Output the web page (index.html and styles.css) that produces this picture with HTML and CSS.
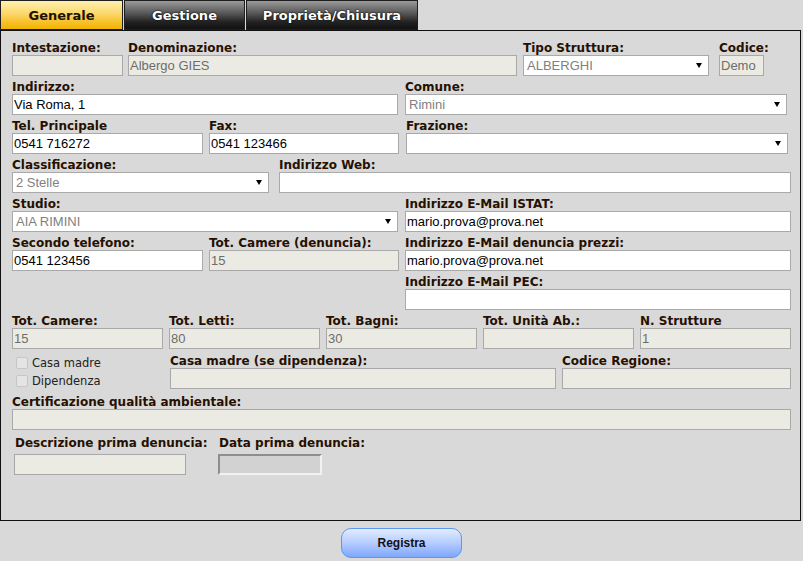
FILE: index.html
```html
<!DOCTYPE html>
<html lang="it">
<head>
<meta charset="utf-8">
<title>Struttura</title>
<link rel="stylesheet" href="styles.css">
</head>
<body>
<div class="tabs">
  <div class="tab tab-active tab-generale">Generale</div>
  <div class="tab tab-gestione">Gestione</div>
  <div class="tab tab-proprieta">Proprietà/Chiusura</div>
</div>
<div class="panel">
  <div class="row">
    <div class="field f-intest"><label>Intestazione:</label><input class="inp dis" disabled value=""></div>
    <div class="field f-denom"><label>Denominazione:</label><input class="inp dis" disabled value="Albergo GIES"></div>
    <div class="field f-tipo"><label>Tipo Struttura:</label><div class="sel"><span>ALBERGHI</span><i class="arrow"></i></div></div>
    <div class="field f-codice"><label>Codice:</label><input class="inp dis" disabled value="Demo"></div>
  </div>
  <div class="row">
    <div class="field f-half"><label>Indirizzo:</label><input class="inp" value="Via Roma, 1"></div>
    <div class="field f-selright"><label>Comune:</label><div class="sel"><span>Rimini</span><i class="arrow"></i></div></div>
  </div>
  <div class="row">
    <div class="field f-q1"><label>Tel. Principale</label><input class="inp" value="0541 716272"></div>
    <div class="field f-q2"><label>Fax:</label><input class="inp" value="0541 123466"></div>
    <div class="field f-selright"><label>Frazione:</label><div class="sel"><span></span><i class="arrow"></i></div></div>
  </div>
  <div class="row">
    <div class="field f-classif"><label>Classificazione:</label><div class="sel"><span>2 Stelle</span><i class="arrow"></i></div></div>
    <div class="field f-web"><label>Indirizzo Web:</label><input class="inp" value=""></div>
  </div>
  <div class="row">
    <div class="field f-half"><label>Studio:</label><div class="sel"><span>AIA RIMINI</span><i class="arrow"></i></div></div>
    <div class="field f-right"><label>Indirizzo E-Mail ISTAT:</label><input class="inp" value="mario.prova@prova.net"></div>
  </div>
  <div class="row">
    <div class="field f-q1"><label>Secondo telefono:</label><input class="inp" value="0541 123456"></div>
    <div class="field f-q2"><label>Tot. Camere (denuncia):</label><input class="inp dis" disabled value="15"></div>
    <div class="field f-right f-right-q"><label>Indirizzo E-Mail denuncia prezzi:</label><input class="inp" value="mario.prova@prova.net"></div>
  </div>
  <div class="row">
    <div class="field f-right f-right-only"><label>Indirizzo E-Mail PEC:</label><input class="inp" value=""></div>
  </div>
  <div class="row row-five">
    <div class="field f-fifth"><label>Tot. Camere:</label><input class="inp dis" disabled value="15"></div>
    <div class="field f-fifth"><label>Tot. Letti:</label><input class="inp dis" disabled value="80"></div>
    <div class="field f-fifth"><label>Tot. Bagni:</label><input class="inp dis" disabled value="30"></div>
    <div class="field f-fifth"><label>Tot. Unità Ab.:</label><input class="inp dis" disabled value=""></div>
    <div class="field f-fifth"><label>N. Strutture</label><input class="inp dis" disabled value="1"></div>
  </div>
  <div class="row row-tight">
    <div class="checks">
      <div class="check"><span class="box"></span>Casa madre</div>
      <div class="check"><span class="box"></span>Dipendenza</div>
    </div>
    <div class="field f-casamadre"><label>Casa madre (se dipendenza):</label><input class="inp dis" disabled value=""></div>
    <div class="field f-regione"><label>Codice Regione:</label><input class="inp dis" disabled value=""></div>
  </div>
  <div class="row row-tight">
    <div class="field f-full"><label>Certificazione qualità ambientale:</label><input class="inp dis" disabled value=""></div>
  </div>
  <div class="row row-last">
    <div class="field f-desc"><label>Descrizione prima denuncia:</label><input class="inp dis" disabled value=""></div>
    <div class="field f-data"><label>Data prima denuncia:</label><div class="date"></div></div>
  </div>
</div>
<div class="actions">
  <button class="btn" type="button">Registra</button>
</div>
</body>
</html>
```
FILE: styles.css
```css
* { box-sizing: border-box; }

html, body {
  margin: 0;
  padding: 0;
  background: #d9d9d9;
}

body {
  width: 803px;
  height: 561px;
  overflow: hidden;
  font-family: "DejaVu Sans", Verdana, sans-serif;
}

/* Tabs */
.tabs {
  display: flex;
  gap: 1px;
  height: 30px;
}

.tab {
  height: 30px;
  border: 1px solid #1e1e1e;
  font-weight: bold;
  font-size: 13px;
  line-height: 30px;
  text-align: center;
  color: #fff;
  text-shadow: 0 0 2px #000, 0 0 1px #000;
  background: linear-gradient(to bottom, #9a9a9a 0%, #555 45%, #222 75%, #111 100%);
}

.tab-active {
  color: #1c1200;
  text-shadow: none;
  background: linear-gradient(to bottom, #fff0b0 0%, #fcd76a 45%, #f7c12a 75%, #f2b300 100%);
}

.tab-generale { width: 123px; }
.tab-gestione { width: 121px; }
.tab-proprieta { width: 172px; }

/* Panel */
.panel {
  width: 801px;
  height: 491px;
  border: 1px solid #111;
  padding: 6px 9px 0 11px;
}

.row {
  display: flex;
  align-items: flex-start;
}

.row-tight { margin-top: 1px; }
.row-last { margin-top: 2px; padding-left: 2px; }

.field {
  display: flex;
  flex-direction: column;
  flex: none;
}

.field label {
  display: block;
  height: 18px;
  line-height: 22px;
  font-size: 12px;
  font-weight: bold;
  color: #261000;
  white-space: nowrap;
}

.row-last .field label {
  margin-bottom: 4px;
  padding-left: 1px;
}

.inp {
  display: block;
  width: 100%;
  height: 21px;
  margin: 0;
  border: 1px solid #a9a9a9;
  border-radius: 0;
  padding: 0 1px;
  background: #fff;
  font-family: "Liberation Sans", Arial, sans-serif;
  font-size: 13px;
  color: #000;
  outline: none;
}

.inp.dis {
  background: #ebebe4;
  color: #6d6d6d;
  -webkit-text-fill-color: #6d6d6d;
  opacity: 1;
}

.sel {
  display: flex;
  align-items: center;
  justify-content: space-between;
  height: 21px;
  border: 1px solid #a9a9a9;
  background: #fff;
  padding: 0 6px 0 3px;
  font-family: "Liberation Sans", Arial, sans-serif;
  font-size: 13px;
  color: #808080;
}

.arrow {
  width: 0;
  height: 0;
  border-left: 3px solid transparent;
  border-right: 3px solid transparent;
  border-top: 5px solid #000;
}

.date {
  height: 21px;
  border-style: solid;
  border-width: 2px;
  border-color: #8e8e8e #f2f2f2 #f2f2f2 #8e8e8e;
  background: #d2d2d2;
}

/* widths */
.f-intest { width: 111px; }
.f-denom { width: 389px; margin-left: 5px; }
.f-tipo { width: 186px; margin-left: 6px; }
.f-codice { width: 45px; margin-left: 10px; }

.f-half { width: 386px; }
.f-selright { width: 382px; margin-left: 7px; }

.f-q1 { width: 191px; }
.f-q2 { width: 190px; margin-left: 6px; }

.f-classif { width: 257px; }
.f-web { width: 512px; margin-left: 10px; }

.f-right { width: 386px; margin-left: 7px; }
.f-right-q { margin-left: 6px; }
.f-right-only { margin-left: 393px; }

.row-five { gap: 6px; }
.f-fifth { width: 151px; }

.checks {
  width: 151px;
  flex: none;
  padding-top: 4px;
}

.check {
  display: flex;
  align-items: center;
  height: 18px;
  font-size: 11.5px;
  color: #222;
}

.box {
  width: 12px;
  height: 12px;
  margin: 0 4px 0 4px;
  border: 1px solid #c6c6c6;
  border-radius: 2px;
  background: #e4e4e4;
}

.f-casamadre { width: 386px; margin-left: 7px; }
.f-regione { width: 229px; margin-left: 6px; }

.f-full { width: 779px; }

.f-desc { width: 172px; }
.f-data { width: 104px; margin-left: 32px; }

/* Actions */
.actions {
  display: flex;
  padding: 7px 0 0 341px;
}

.btn {
  width: 121px;
  height: 30px;
  border: 1px solid #5b97f5;
  border-radius: 10px;
  background: linear-gradient(to bottom, #e3ecff 0%, #b5ccff 50%, #7ea7fb 100%);
  font-family: "Liberation Sans", Arial, sans-serif;
  font-weight: bold;
  font-size: 12px;
  color: #111;
  padding: 0;
}
```
